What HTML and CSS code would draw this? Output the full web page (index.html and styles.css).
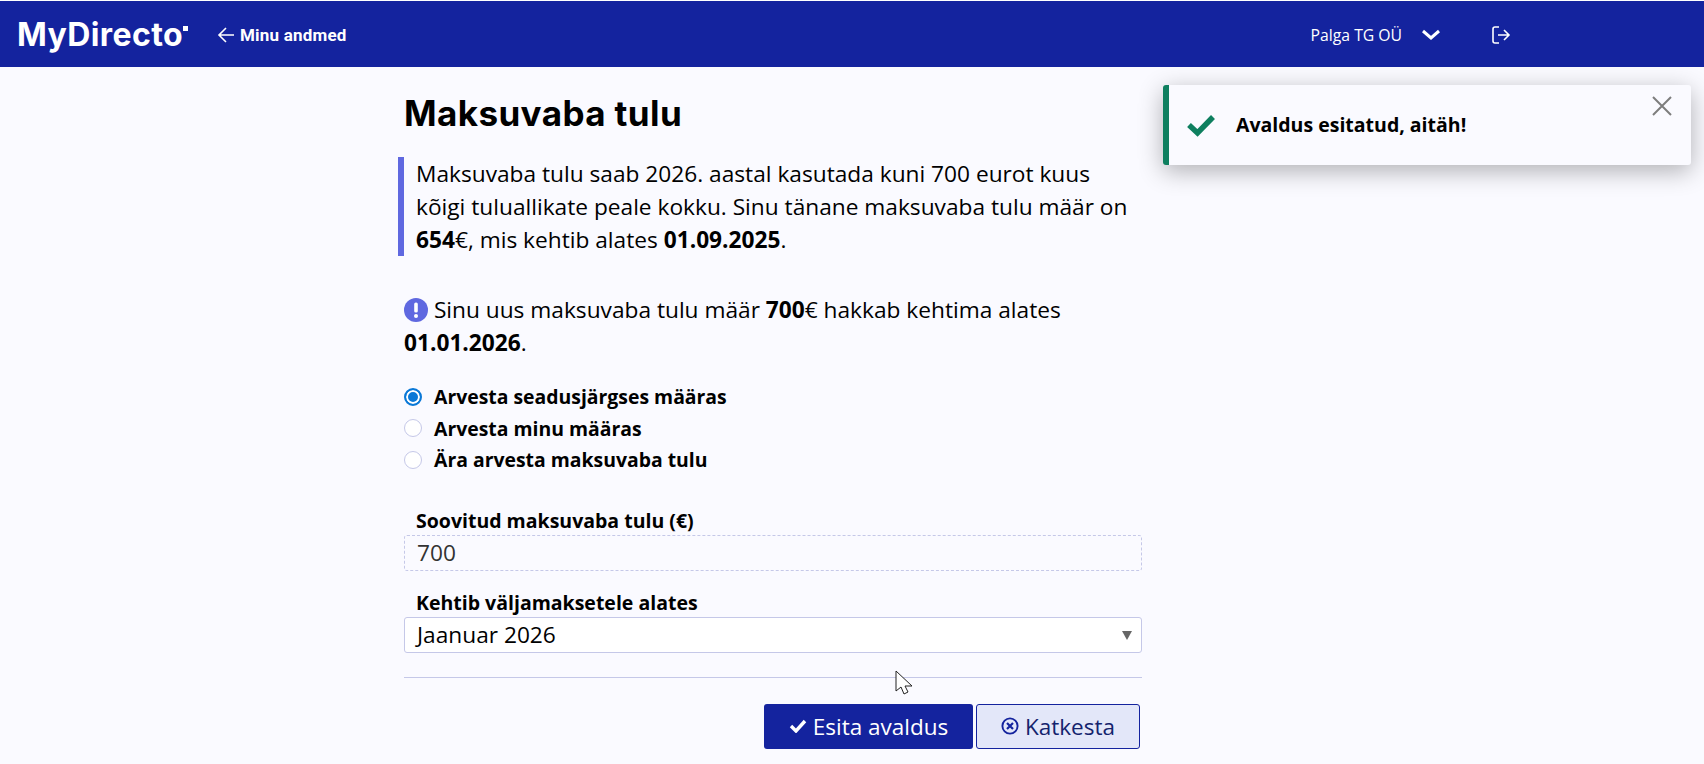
FILE: index.html
```html
<!DOCTYPE html>
<html lang="et">
<head>
    <meta charset="UTF-8">
    <meta name="viewport" content="width=device-width, initial-scale=1.0">
    <title>Maksuvaba tulu</title>
    <link rel="stylesheet" href="styles.css">
</head>
<body>
    <header class="topbar">
        <div class="brand">MyDirecto<span class="brand-tick"></span></div>
        <a class="back-link">
            <svg class="back-arrow" viewBox="0 0 18 18" width="18" height="18"><path d="M17 9H2M9 2L2 9l7 7" fill="none" stroke="#fff" stroke-width="1.6"/></svg>
            Minu andmed
        </a>
        <div class="company">Palga TG OÜ</div>
        <svg class="chevron" viewBox="0 0 20 12" width="20" height="12"><path d="M2 2l8 7 8-7" fill="none" stroke="#fff" stroke-width="3"/></svg>
        <svg class="logout" viewBox="0 0 20 20" width="20" height="20"><path d="M8 2H4a2 2 0 0 0-2 2v12a2 2 0 0 0 2 2h4M7 10h11M13 5l5 5-5 5" fill="none" stroke="#fff" stroke-width="1.6"/></svg>
    </header>

    <main class="content">
        <h1 class="title">Maksuvaba tulu</h1>
        <blockquote class="intro">
            Maksuvaba tulu saab 2026. aastal kasutada kuni 700 eurot kuus<br>
            kõigi tuluallikate peale kokku. Sinu tänane maksuvaba tulu määr on<br>
            <b>654</b>€, mis kehtib alates <b>01.09.2025</b>.
        </blockquote>
        <p class="notice">
            <svg class="notice-icon" viewBox="0 0 24 24" width="24" height="24"><circle cx="12" cy="12" r="12" fill="#5f68e0"/><rect x="10.2" y="4.5" width="3.6" height="10" rx="1.6" fill="#fff"/><circle cx="12" cy="18" r="2" fill="#fff"/></svg>
            Sinu uus maksuvaba tulu määr <b>700</b>€ hakkab kehtima alates<br>
            <b>01.01.2026</b>.
        </p>
        <div class="radios">
            <label class="radio-row"><span class="radio radio-on"></span>Arvesta seadusjärgses määras</label>
            <label class="radio-row"><span class="radio"></span>Arvesta minu määras</label>
            <label class="radio-row"><span class="radio"></span>Ära arvesta maksuvaba tulu</label>
        </div>
        <div class="field">
            <div class="field-label">Soovitud maksuvaba tulu (€)</div>
            <div class="input-box input-readonly">700</div>
        </div>
        <div class="field">
            <div class="field-label">Kehtib väljamaksetele alates</div>
            <div class="input-box input-select">Jaanuar 2026<span class="select-caret"></span></div>
        </div>
        <hr class="divider">
        <div class="actions">
            <button class="btn btn-primary">
                <svg viewBox="0 0 18 14" width="18" height="14"><path d="M2 7l5 5 9-10" fill="none" stroke="#fff" stroke-width="3.4"/></svg>
                Esita avaldus
            </button>
            <button class="btn btn-outline">
                <svg viewBox="0 0 18 18" width="18" height="18"><circle cx="9" cy="9" r="7.6" fill="none" stroke="#14239e" stroke-width="1.9"/><path d="M6 6l6 6M12 6l-6 6" fill="none" stroke="#14239e" stroke-width="2.2"/></svg>
                Katkesta
            </button>
        </div>
    </main>

    <div class="toast">
        <svg class="toast-check" viewBox="0 0 30 24" width="30" height="24"><path d="M3 12l8.5 8L27 4" fill="none" stroke="#0e7f5f" stroke-width="5.5"/></svg>
        <span class="toast-text">Avaldus esitatud, aitäh!</span>
        <svg class="toast-close" viewBox="0 0 20 20" width="20" height="20"><path d="M1 1l18 18M19 1L1 19" fill="none" stroke="#7d7d7d" stroke-width="2"/></svg>
    </div>

    <svg class="cursor" viewBox="0 0 20 28" width="20" height="28"><path d="M1 1v20l5-4 3 7 4-2-3-6h7z" fill="#fff" stroke="#222" stroke-width="1"/></svg>
</body>
</html>
```

FILE: styles.css
```css
* {
    margin: 0;
    padding: 0;
    box-sizing: border-box;
}

body {
    height: 764px;
    background: #fafaff;
    overflow: hidden;
    position: relative;
    font-family: 'Open Sans', 'Noto Sans', sans-serif;
    color: #000;
    border-top: 1px solid #fff;
}

.topbar {
    height: 66px;
    background: #14239e;
    color: #fff;
    display: flex;
    align-items: center;
}

.brand {
    margin-left: 17px;
    width: 200px;
    font-family: 'Inter', sans-serif;
    font-weight: 700;
    font-size: 32px;
    letter-spacing: 0.4px;
    position: relative;
}

.brand-tick {
    display: inline-block;
    width: 5px;
    height: 5px;
    background: #fff;
    vertical-align: 15px;
}

.back-link {
    display: flex;
    align-items: center;
    gap: 5px;
    font-family: 'Roboto', sans-serif;
    font-weight: 700;
    font-size: 17px;
    letter-spacing: 0.2px;
    padding-top: 2px;
}

.company {
    margin-left: 964px;
    font-size: 15.75px;
    padding-top: 2px;
}

.chevron {
    margin-left: 19px;
    margin-top: 2px;
}

.logout {
    margin-left: 50px;
    margin-top: 2px;
}

.content {
    width: 738px;
    margin-left: 404px;
}

.title {
    font-family: 'Inter', sans-serif;
    font-weight: 700;
    font-size: 35px;
    letter-spacing: 0.4px;
    line-height: 40px;
    margin-top: 26px;
}

.intro {
    margin: 24px 0 0 -6px;
    padding-left: 12px;
    border-left: 6px solid #5f68e0;
    font-size: 22.7px;
    line-height: 33px;
}

.notice {
    margin-top: 37px;
    font-size: 22.7px;
    line-height: 33px;
}

.notice-icon {
    vertical-align: -4px;
}

.radios {
    margin-top: 22px;
}

.radio-row {
    display: flex;
    align-items: center;
    gap: 12px;
    height: 31.5px;
    font-size: 19.4px;
    font-weight: 700;
}

.radio {
    width: 18px;
    height: 18px;
    border-radius: 50%;
    background: #fff;
    border: 1px solid #c5c8e8;
}

.radio-on {
    border: 2px solid #0a78d7;
    box-shadow: inset 0 0 0 2px #fff;
    background: #0a78d7;
}

.field {
    margin-top: 30px;
}

.field + .field {
    margin-top: 17px;
}

.field-label {
    font-size: 19.5px;
    font-weight: 700;
    line-height: 29px;
    padding-left: 12px;
}

.input-box {
    height: 36px;
    padding-left: 12px;
    font-size: 22.7px;
    line-height: 34px;
    border-radius: 3px;
    position: relative;
}

.input-readonly {
    border: 1px dashed #c5c8e8;
    color: #333;
}

.input-select {
    border: 1px solid #c5c8e8;
    background: #fff;
}

.select-caret {
    position: absolute;
    right: 9px;
    top: 13px;
    border-left: 5px solid transparent;
    border-right: 5px solid transparent;
    border-top: 9px solid #666;
}

.divider {
    margin-top: 24px;
    border: 0;
    border-top: 1px solid #c5c8e8;
}

.actions {
    display: flex;
    gap: 3px;
    margin-top: 26px;
}

.btn {
    height: 45px;
    border-radius: 3px;
    font-family: 'Open Sans', sans-serif;
    font-size: 22.5px;
    display: flex;
    align-items: center;
    justify-content: center;
    gap: 6px;
}

.btn-primary {
    width: 209px;
    margin-left: 360px;
    background: #14239e;
    border: 0;
    color: #fff;
}

.btn-outline {
    width: 164px;
    background: #e3e7f9;
    border: 1px solid #14239e;
    color: #14236e;
}

.toast {
    position: absolute;
    left: 1163px;
    top: 84px;
    width: 528px;
    height: 80px;
    background: #fafaff;
    border-left: 6px solid #0e7f5f;
    border-radius: 3px;
    box-shadow: 0 6px 24px rgba(0,0,0,0.3);
    display: flex;
    align-items: center;
}

.toast-check {
    margin-left: 17px;
}

.toast-text {
    margin-left: 20px;
    margin-bottom: 2px;
    font-size: 19.5px;
    font-weight: 700;
}

.toast-close {
    position: absolute;
    right: 19px;
    top: 11px;
}

.cursor {
    position: absolute;
    left: 895px;
    top: 669px;
}
```
